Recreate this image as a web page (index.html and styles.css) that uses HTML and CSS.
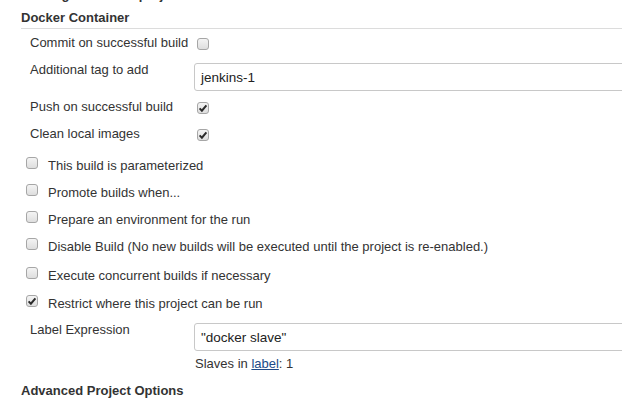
FILE: index.html
```html
<!DOCTYPE html>
<html>
<head>
<meta charset="utf-8">
<link rel="stylesheet" href="styles.css">
</head>
<body>
<div class="page">
  <div class="cut">Sharing with other projects</div>
  <div class="section-title">Docker Container</div>
  <div class="docker">
    <div class="row">
      <div class="label">Commit on successful build</div>
      <div class="control"><span class="cb"></span></div>
    </div>
    <div class="row row-input">
      <div class="label">Additional tag to add</div>
      <div class="control"><div class="input">jenkins-1</div></div>
    </div>
    <div class="row">
      <div class="label">Push on successful build</div>
      <div class="control"><span class="cb checked"><svg viewBox="0 0 12 12" width="12" height="12"><path d="M2.6 6.4 L4.9 8.7 L9.4 3.4" fill="none" stroke="#2b2b2b" stroke-width="2"/></svg></span></div>
    </div>
    <div class="row">
      <div class="label">Clean local images</div>
      <div class="control"><span class="cb checked"><svg viewBox="0 0 12 12" width="12" height="12"><path d="M2.6 6.4 L4.9 8.7 L9.4 3.4" fill="none" stroke="#2b2b2b" stroke-width="2"/></svg></span></div>
    </div>
  </div>

  <div class="options">
    <div class="opt"><span class="cb"></span><span class="opt-text">This build is parameterized</span></div>
    <div class="opt"><span class="cb"></span><span class="opt-text">Promote builds when...</span></div>
    <div class="opt"><span class="cb"></span><span class="opt-text">Prepare an environment for the run</span></div>
    <div class="opt"><span class="cb"></span><span class="opt-text">Disable Build (No new builds will be executed until the project is re-enabled.)</span></div>
    <div class="opt opt-wide"><span class="cb"></span><span class="opt-text">Execute concurrent builds if necessary</span></div>
    <div class="opt opt-mid"><span class="cb checked"><svg viewBox="0 0 12 12" width="12" height="12"><path d="M2.6 6.4 L4.9 8.7 L9.4 3.4" fill="none" stroke="#2b2b2b" stroke-width="2"/></svg></span><span class="opt-text">Restrict where this project can be run</span></div>
  </div>

  <div class="row row-input label-row">
    <div class="label">Label Expression</div>
    <div class="control">
      <div class="input">"docker slave"</div>
      <div class="hint">Slaves in <a href="#" class="link">label</a>: 1</div>
    </div>
  </div>

  <div class="section-title advanced">Advanced Project Options</div>
</div>
</body>
</html>
```

FILE: styles.css
```css
html, body {
  margin: 0;
  padding: 0;
  background: #fff;
  overflow: hidden;
}
body {
  font-family: "Liberation Sans", Arial, sans-serif;
  font-size: 13px;
  line-height: 16px;
  color: #333;
}
.page {
  padding-left: 21px;
  width: 601px;
}
.cut {
  margin-top: -13px;
  height: 16px;
  font-weight: bold;
}
.section-title {
  font-weight: bold;
  margin-top: 7px;
  padding-bottom: 2px;
  border-bottom: 1px solid #dcdcdc;
}
.docker {
  margin-top: 1px;
  padding-left: 9px;
}
.row {
  display: flex;
  padding: 5px 0 6px;
}
.label {
  width: 164px;
  flex: none;
}
.control {
  flex: 1;
  min-width: 0;
  display: flex;
  flex-direction: column;
  align-items: flex-start;
}
.row .control .cb {
  margin-left: 3px;
  margin-top: 3px;
}
.row-input {
  padding-bottom: 3px;
}
.row-input .control {
  align-items: stretch;
}
.input {
  margin-top: 1px;
  height: 26px;
  border: 1px solid #c8c8c8;
  border-radius: 3px;
  margin-right: -12px;
  padding: 0 6px;
  line-height: 27px;
  font-size: 13.5px;
  color: #222;
}
.cb {
  display: inline-block;
  box-sizing: border-box;
  width: 12px;
  height: 12px;
  border: 1px solid #a6a6a6;
  border-radius: 3px;
  background: linear-gradient(#f4f4f4, #dedede);
  flex: none;
  position: relative;
}
.cb svg {
  position: absolute;
  left: -1px;
  top: -1px;
}
.options {
  margin-top: 3px;
  padding-left: 5px;
}
.opt {
  display: flex;
  align-items: flex-start;
  padding: 6px 0 5px;
}
.opt .cb {
  margin-top: 0px;
}
.opt-text {
  margin-left: 10px;
  margin-top: 1px;
  margin-bottom: -1px;
}
.opt-wide {
  margin-top: 2px;
}
.opt-mid {
  margin-top: 1px;
}
.label-row {
  padding-left: 9px;
  padding-top: 6px;
}
.hint {
  margin-top: 5px;
  padding-left: 1px;
}
.link {
  color: #204a87;
  text-decoration: underline;
}
.advanced {
  margin-top: 8px;
  border-bottom: none;
}
```
